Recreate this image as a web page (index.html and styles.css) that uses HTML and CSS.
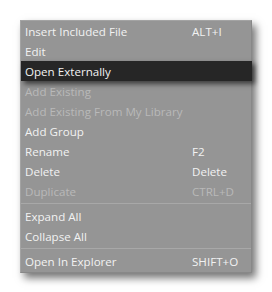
FILE: index.html
```html
<!DOCTYPE html>
<html lang="en">
<head>
  <meta charset="UTF-8" />
  <title>Context Menu</title>
  <link rel="stylesheet" href="styles.css">
</head>
<body>
  <div class="menu">
    <div class="item"><span>Insert Included File</span><span class="key">ALT+I</span></div>
    <div class="item"><span>Edit</span></div>
    <div class="item active"><span>Open Externally</span></div>
    <div class="item disabled"><span>Add Existing</span></div>
    <div class="item disabled"><span>Add Existing From My Library</span></div>
    <div class="item"><span>Add Group</span></div>
    <div class="item"><span>Rename</span><span class="key">F2</span></div>
    <div class="item"><span>Delete</span><span class="key">Delete</span></div>
    <div class="item disabled"><span>Duplicate</span><span class="key">CTRL+D</span></div>
    <div class="sep"></div>
    <div class="item"><span>Expand All</span></div>
    <div class="item"><span>Collapse All</span></div>
    <div class="sep"></div>
    <div class="item"><span>Open In Explorer</span><span class="key">SHIFT+O</span></div>
  </div>
</body>
</html>
```

FILE: styles.css
```css
* { box-sizing: border-box; margin: 0; padding: 0; }
body {
  background: #fff;
  padding: 20px;
  font-family: 'Open Sans', sans-serif;
  font-size: 11.6px;
}
.menu {
  width: 232px;
  background: #959595;
  border: 1px solid #a3a3a3;
  border-right-color: #888;
  border-bottom-color: #888;
  box-shadow: 4px 5px 8px rgba(0, 0, 0, 0.55);
  padding-bottom: 1px;
}
.item {
  display: grid;
  grid-template-columns: 167px 1fr;
  height: 20px;
  align-items: center;
  padding-left: 4px;
  color: #f2f2f2;
}
.item.active {
  background: #262626;
  margin-right: -1px;
  box-shadow: 3px 3px 5px rgba(0, 0, 0, 0.6);
  position: relative;
}
.item.disabled {
  color: #b9b9b9;
}
.sep {
  height: 1px;
  margin: 2px 0;
  background: #a8a8a8;
}
```
